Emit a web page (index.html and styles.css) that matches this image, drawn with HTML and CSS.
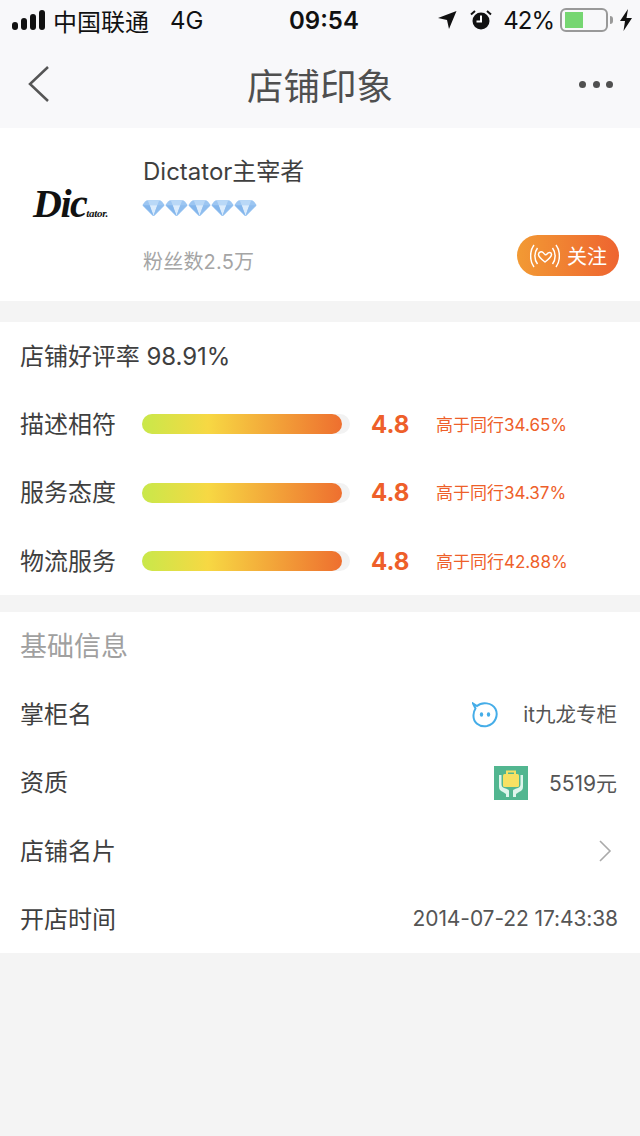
FILE: index.html
```html
<!DOCTYPE html>
<html lang="zh-CN">
<head>
    <meta charset="UTF-8">
    <meta name="viewport" content="width=device-width, initial-scale=1.0">
    <title>店铺印象</title>
    <link rel="stylesheet" href="styles.css">
</head>
<body>
    <div class="top-bar">
        <div class="status-bar">
            <div class="status-left">
                <svg class="signal" width="34" height="20" viewBox="0 0 34 20">
                    <rect x="0" y="12" width="6" height="8" rx="3" fill="#111"/>
                    <rect x="9" y="8" width="6" height="12" rx="3" fill="#111"/>
                    <rect x="18" y="4" width="6" height="16" rx="3" fill="#111"/>
                    <rect x="27" y="0" width="6" height="20" rx="3" fill="#111"/>
                </svg>
                <span class="carrier">中国联通</span>
                <span class="network">4G</span>
            </div>
            <div class="status-time">09:54</div>
            <div class="status-right">
                <svg class="arrow-icon" width="19" height="18" viewBox="0 0 19 18">
                    <path d="M0 7 L18.500 0 L11 18 L9 9 Z" fill="#111"/>
                </svg>
                <svg class="alarm-icon" width="22" height="20" viewBox="0 0 22 20">
                    <circle cx="11" cy="11" r="8.500" fill="#111"/>
                    <path d="M11 5.500 V11.500 H6.500" fill="none" stroke="#fff" stroke-width="2"/>
                    <path d="M1 4.500 L5 1 M21 4.500 L17 1" stroke="#111" stroke-width="2"/>
                </svg>
                <span class="battery-text">42%</span>
                <div class="battery">
                    <div class="battery-fill"></div>
                </div>
                <div class="battery-cap"></div>
                <svg class="bolt" width="12" height="22" viewBox="0 0 12 22">
                    <path d="M8 0 L0 12 H5 L3.500 22 L12 9 H6.500 Z" fill="#111"/>
                </svg>
            </div>
        </div>
        <div class="nav-bar">
            <div class="nav-side">
                <svg class="nav-back" width="24" height="38" viewBox="0 0 24 38">
                    <path d="M21 2 L3 19 L21 36" fill="none" stroke="#555" stroke-width="2.500"/>
                </svg>
            </div>
            <h1 class="nav-title">店铺印象</h1>
            <div class="nav-side nav-side-right">
                <div class="nav-more"><span></span><span></span><span></span></div>
            </div>
        </div>
    </div>

    <section class="shop-card">
        <div class="shop-logo"><span class="logo-big">Dic</span><span class="logo-small">tator.</span></div>
        <div class="shop-info">
            <div class="shop-name">Dictator主宰者</div>
            <div class="diamonds">
                <svg class="diamond" viewBox="0 0 24 18"><use href="#gem"/></svg>
                <svg class="diamond" viewBox="0 0 24 18"><use href="#gem"/></svg>
                <svg class="diamond" viewBox="0 0 24 18"><use href="#gem"/></svg>
                <svg class="diamond" viewBox="0 0 24 18"><use href="#gem"/></svg>
                <svg class="diamond" viewBox="0 0 24 18"><use href="#gem"/></svg>
            </div>
            <div class="shop-fans">粉丝数2.5万</div>
        </div>
        <div class="follow-btn">
            <svg width="30" height="24" viewBox="0 0 30 24" fill="none" stroke="#fff" stroke-width="1.500">
                <path d="M15 18 C11 15 8.500 13 8.500 10.500 C8.500 8 11.500 7 13 8.500 C14.500 10 15.500 12 17 10 C18.500 8 21.500 8 21.500 10.500 C21.500 13 19 15 15 18 Z"/>
                <path d="M7.500 4 C4 8.500 4 15.500 7.500 20"/>
                <path d="M4 1 C-0.500 7 -0.500 17 4 23"/>
                <path d="M22.500 4 C26 8.500 26 15.500 22.500 20"/>
                <path d="M26 1 C30.500 7 30.500 17 26 23"/>
            </svg>
            <span>关注</span>
        </div>
    </section>

    <section class="rating-card">
        <div class="rating-head">店铺好评率 98.91%</div>
        <div class="rating-row">
            <span class="row-label">描述相符</span>
            <div class="bar"><div class="bar-fill"></div></div>
            <span class="score">4.8</span>
            <span class="compare">高于同行34.65%</span>
        </div>
        <div class="rating-row">
            <span class="row-label">服务态度</span>
            <div class="bar"><div class="bar-fill"></div></div>
            <span class="score">4.8</span>
            <span class="compare">高于同行34.37%</span>
        </div>
        <div class="rating-row">
            <span class="row-label">物流服务</span>
            <div class="bar"><div class="bar-fill"></div></div>
            <span class="score">4.8</span>
            <span class="compare">高于同行42.88%</span>
        </div>
    </section>

    <section class="info-card">
        <div class="info-head">基础信息</div>
        <div class="info-row">
            <span class="row-label">掌柜名</span>
            <div class="info-value">
                <svg class="wang-icon" width="26" height="26" viewBox="0 0 26 26">
                    <path d="M5 4 C10 -0.500 20 0.500 23.500 7 C26.500 13 23.500 22 15 24 C7 25.500 1 20 1.500 13 C1.700 10 2.500 8 3.500 6.500 L1 1.500 Z" fill="none" stroke="#45ade8" stroke-width="2"/>
                    <ellipse cx="9.500" cy="12.500" rx="1.700" ry="2.300" fill="#45ade8"/>
                    <ellipse cx="16.500" cy="12.500" rx="1.700" ry="2.300" fill="#45ade8"/>
                </svg>
                <span class="wang-name">it九龙专柜</span>
            </div>
        </div>
        <div class="info-row">
            <span class="row-label">资质</span>
            <div class="info-value">
                <svg class="deposit-icon" width="34" height="34" viewBox="0 0 34 34">
                    <rect width="34" height="34" fill="#52b690"/>
                    <path d="M13 9 V5.500 H21 V9" fill="none" stroke="#f7e163" stroke-width="2"/>
                    <rect x="9" y="8" width="16" height="13" rx="1.500" fill="#f7e163"/>
                    <path d="M5 9 V21 C5 24 7 25 9 26 L12 28 V31 H15 V25 C15 23 12 23 10 22 C8 21 7.500 20 7.500 18 V9 Z" fill="#dff5ec"/>
                    <path d="M29 9 V21 C29 24 27 25 25 26 L22 28 V31 H19 V25 C19 23 22 23 24 22 C26 21 26.500 20 26.500 18 V9 Z" fill="#dff5ec"/>
                </svg>
                <span class="deposit">5519元</span>
            </div>
        </div>
        <div class="info-row">
            <span class="row-label">店铺名片</span>
            <svg class="chevron" width="14" height="24" viewBox="0 0 14 24">
                <path d="M2 2 L12 12 L2 22" fill="none" stroke="#aaa" stroke-width="1.600"/>
            </svg>
        </div>
        <div class="info-row">
            <span class="row-label">开店时间</span>
            <span class="open-time">2014-07-22 17:43:38</span>
        </div>
    </section>

    <svg width="0" height="0" class="defs">
        <defs>
            <symbol id="gem" viewBox="0 0 24 18">
                <path d="M6 1 H18 C19 1 20 1.500 21 2.500 L23 5 C23.500 5.700 23.500 6.500 23 7 L13 17 C12.500 17.500 11.500 17.500 11 17 L1 7 C0.500 6.500 0.500 5.700 1 5 L3 2.500 C4 1.500 5 1 6 1 Z" fill="#9cc6f2"/>
                <path d="M6 1 H18 L16 6 H8 Z" fill="#b9d8f7"/>
                <path d="M8 6 H16 L12 17 Z" fill="#dcecfc"/>
                <path d="M1 6 H8 L12 17 Z" fill="#84b6ec"/>
                <path d="M23 6 H16 L12 17 Z" fill="#8fbdee"/>
            </symbol>
        </defs>
    </svg>
</body>
</html>
```
FILE: styles.css
```css
* {
    box-sizing: border-box;
}

body {
    margin: 0;
    background: #f4f4f4;
    font-family: Inter, "Noto Sans CJK SC", sans-serif;
    color: #3b3b3b;
    height: 1136px;
    overflow: hidden;
}

.defs {
    display: block;
}

.top-bar {
    height: 128px;
    background: #f8f8fa;
}

.status-bar {
    height: 40px;
    display: flex;
    align-items: center;
    justify-content: space-between;
    padding: 0 6px 0 12px;
    color: #111;
    font-size: 24px;
    position: relative;
}

.status-left,
.status-right {
    display: flex;
    align-items: center;
}

.carrier {
    margin-left: 7px;
}

.network {
    margin-left: 21px;
}

.status-time {
    position: absolute;
    left: 289px;
    top: 6px;
    font-weight: 600;
    font-size: 24px;
}

.alarm-icon {
    margin-left: 13px;
}

.battery-text {
    margin-left: 11px;
    letter-spacing: -1px;
}

.battery {
    width: 48px;
    height: 24px;
    margin-left: 6px;
    border: 2px solid #999;
    border-radius: 6px;
    padding: 2px;
}

.battery-fill {
    width: 18px;
    height: 16px;
    background: #76d672;
    margin-left: 1px;
}

.battery-cap {
    width: 3px;
    height: 8px;
    margin-left: 2px;
    background: #999;
    border-radius: 0 3px 3px 0;
}

.bolt {
    margin-left: 7px;
    margin-right: 2px;
}

.nav-bar {
    height: 88px;
    display: flex;
    align-items: center;
    padding: 0 27px;
}

.nav-side {
    flex: 1;
    display: flex;
    align-items: center;
}

.nav-side-right {
    justify-content: flex-end;
}

.nav-title {
    margin: 0;
    font-size: 36.500px;
    font-weight: 400;
    color: #4f4f4f;
}

.nav-more {
    display: flex;
    gap: 6.500px;
}

.nav-more span {
    width: 7px;
    height: 7px;
    border-radius: 50%;
    background: #505050;
}

.shop-card {
    height: 173px;
    background: #fff;
    display: flex;
    padding: 0 21px 0 33px;
}

.shop-logo {
    width: 110px;
    padding-top: 52px;
    font-family: "Liberation Serif", serif;
    font-style: italic;
    font-weight: 700;
    color: #111;
    white-space: nowrap;
}

.logo-big {
    font-size: 40px;
    letter-spacing: -1.500px;
}

.logo-small {
    font-size: 11px;
    letter-spacing: -0.300px;
}

.shop-info {
    flex: 1;
    padding-top: 27px;
}

.shop-name {
    font-size: 24px;
    line-height: 34px;
    color: #3f3f3f;
}

.diamonds {
    display: flex;
    margin-top: 10px;
    margin-left: -1px;
    height: 18px;
}

.diamond {
    width: 23px;
    height: 18px;
}

.shop-fans {
    margin-top: 30px;
    font-size: 20px;
    line-height: 30px;
    letter-spacing: 0.200px;
    color: #a5a5a5;
}

.follow-btn {
    width: 102px;
    height: 41px;
    margin-top: 107px;
    border-radius: 21px;
    background: linear-gradient(90deg, #f29a34, #ee6430);
    color: #fff;
    display: flex;
    align-items: center;
    gap: 7px;
    padding-left: 13px;
    font-size: 20px;
}

.follow-btn svg {
    flex: none;
}

.rating-card {
    margin-top: 21px;
    height: 273px;
    background: #fff;
    padding: 0 20px;
}

.rating-head {
    height: 68px;
    display: flex;
    align-items: center;
    padding-bottom: 4px;
    font-size: 24px;
    letter-spacing: -0.050px;
    color: #3f3f3f;
}

.rating-row {
    height: 68.500px;
    display: flex;
    align-items: center;
}

.row-label {
    font-size: 24px;
    padding-bottom: 4px;
    color: #3f3f3f;
}

.rating-row .row-label {
    width: 122px;
    flex: none;
}

.bar {
    width: 208px;
    height: 20px;
    border-radius: 10px;
    background: #f2f2f2;
    flex: none;
}

.bar-fill {
    width: 200px;
    height: 20px;
    border-radius: 10px;
    background: linear-gradient(90deg, #c9e84a 0%, #f7d843 33%, #ee6f2f 100%);
}

.score {
    width: 65px;
    flex: none;
    margin-left: 21px;
    font-size: 24px;
    font-weight: 700;
    color: #ee5f2a;
}

.compare {
    font-size: 17px;
    padding-bottom: 2px;
    color: #ee5f2a;
    white-space: nowrap;
}

.info-card {
    margin-top: 17px;
    height: 341px;
    background: #fff;
    padding: 0 22px 0 20px;
}

.info-head {
    height: 68px;
    display: flex;
    align-items: center;
    padding-bottom: 4px;
    font-size: 27px;
    color: #a0a0a0;
}

.info-row {
    height: 68.500px;
    display: flex;
    align-items: center;
    justify-content: space-between;
}

.info-value {
    display: flex;
    align-items: center;
}

.wang-name,
.deposit,
.open-time {
    font-size: 21px;
    padding-bottom: 2px;
    color: #555;
}

.open-time {
    letter-spacing: -0.100px;
}

.wang-icon {
    margin-top: 2px;
}

.wang-name {
    font-size: 20.500px;
    margin-left: 25px;
    margin-right: 1px;
}

.deposit {
    margin-left: 21px;
    margin-right: 1px;
}

.chevron {
    margin-right: 6px;
}
```
